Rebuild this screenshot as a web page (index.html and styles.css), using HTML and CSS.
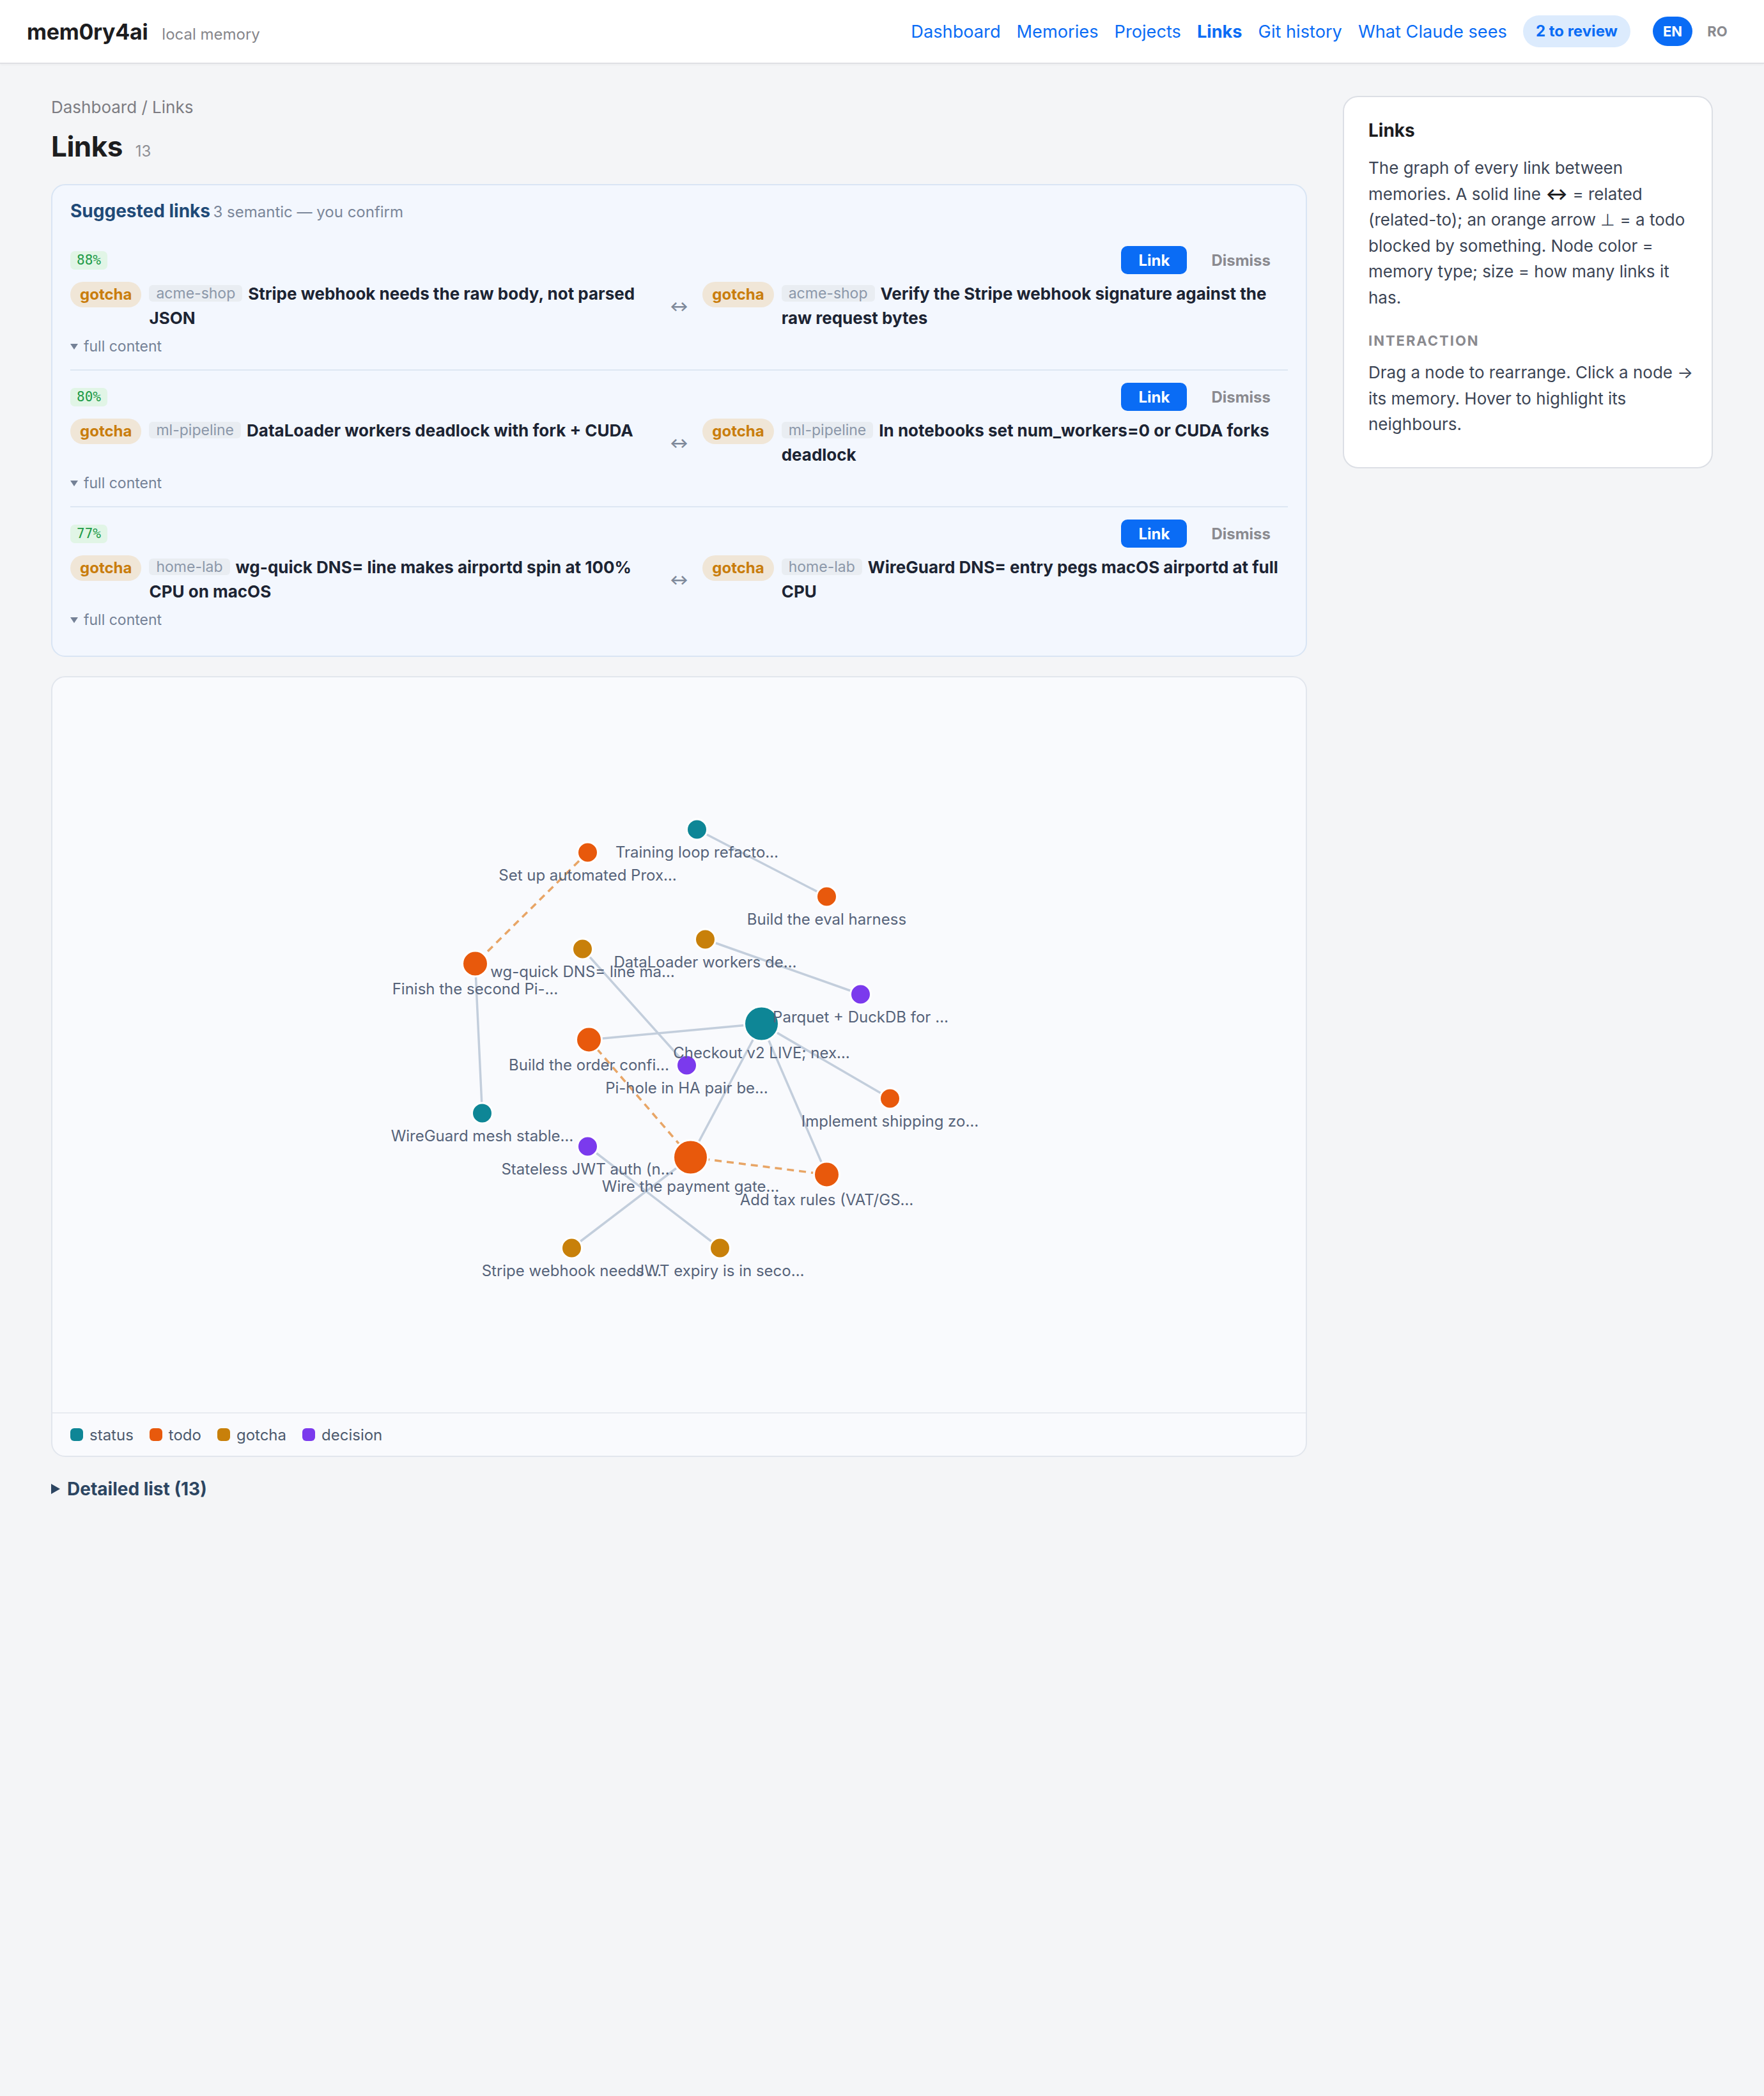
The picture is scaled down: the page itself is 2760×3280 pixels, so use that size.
FILE: index.html
```html
<!DOCTYPE html>
<html lang="en">
<head>
<meta charset="utf-8">
<title>Links · mem0ry4ai</title>
<link rel="stylesheet" href="styles.css">
</head>
<body>
<header class="topbar">
  <div class="brand">
    <span class="logo">mem0ry4ai</span>
    <span class="tagline">local memory</span>
  </div>
  <nav class="nav">
    <a class="nav-link" href="#">Dashboard</a>
    <a class="nav-link" href="#">Memories</a>
    <a class="nav-link" href="#">Projects</a>
    <a class="nav-link is-current" href="#">Links</a>
    <a class="nav-link" href="#">Git history</a>
    <a class="nav-link" href="#">What Claude sees</a>
    <a class="review-pill" href="#">2 to review</a>
    <div class="lang">
      <span class="lang-btn is-on">EN</span>
      <span class="lang-btn">RO</span>
    </div>
  </nav>
</header>

<div class="layout">
  <main class="main">
    <div class="crumbs">Dashboard / Links</div>
    <h1 class="page-title">Links <span class="count">13</span></h1>

    <section class="suggest">
      <div class="suggest-title"><strong>Suggested links</strong> <span class="suggest-sub">3 semantic — you confirm</span></div>

      <div class="sugg-list">
        <div class="sugg-row">
          <div class="row-head">
            <span class="pct">88%</span>
            <div class="actions"><button class="btn-link">Link</button><button class="btn-dismiss">Dismiss</button></div>
          </div>
          <div class="pair">
            <div class="side"><span class="kind">gotcha</span><div class="text"><span class="proj">acme-shop</span>Stripe webhook needs the raw body, not parsed JSON</div></div>
            <span class="arrow">↔</span>
            <div class="side"><span class="kind">gotcha</span><div class="text"><span class="proj">acme-shop</span>Verify the Stripe webhook signature against the raw request bytes</div></div>
          </div>
          <div class="more"><span class="caret"></span>full content</div>
        </div>

        <div class="sugg-row">
          <div class="row-head">
            <span class="pct">80%</span>
            <div class="actions"><button class="btn-link">Link</button><button class="btn-dismiss">Dismiss</button></div>
          </div>
          <div class="pair">
            <div class="side"><span class="kind">gotcha</span><div class="text"><span class="proj">ml-pipeline</span>DataLoader workers deadlock with fork + CUDA</div></div>
            <span class="arrow">↔</span>
            <div class="side"><span class="kind">gotcha</span><div class="text"><span class="proj">ml-pipeline</span>In notebooks set num_workers=0 or CUDA forks deadlock</div></div>
          </div>
          <div class="more"><span class="caret"></span>full content</div>
        </div>

        <div class="sugg-row">
          <div class="row-head">
            <span class="pct">77%</span>
            <div class="actions"><button class="btn-link">Link</button><button class="btn-dismiss">Dismiss</button></div>
          </div>
          <div class="pair">
            <div class="side"><span class="kind">gotcha</span><div class="text"><span class="proj">home-lab</span>wg-quick DNS= line makes airportd spin at 100% CPU on macOS</div></div>
            <span class="arrow">↔</span>
            <div class="side"><span class="kind">gotcha</span><div class="text"><span class="proj">home-lab</span>WireGuard DNS= entry pegs macOS airportd at full CPU</div></div>
          </div>
          <div class="more"><span class="caret"></span>full content</div>
        </div>
      </div>
    </section>

    <section class="graph-card">
      <svg class="graph" viewBox="0 0 1960 1150" width="1960" height="1150">
        <g class="edges">
          <line class="edge" x1="1008" y1="238" x2="1211" y2="343"/>
          <line class="edge blocked" x1="837" y1="274" x2="661" y2="448"/>
          <line class="edge" x1="661" y1="448" x2="672" y2="682"/>
          <line class="edge" x1="829" y1="425" x2="992" y2="607"/>
          <line class="edge" x1="1021" y1="410" x2="1264" y2="496"/>
          <line class="edge" x1="839" y1="567" x2="1109" y2="542"/>
          <line class="edge blocked" x1="839" y1="567" x2="998" y2="751"/>
          <line class="edge" x1="1109" y1="542" x2="998" y2="751"/>
          <line class="edge" x1="1109" y1="542" x2="1211" y2="778"/>
          <line class="edge" x1="1109" y1="542" x2="1310" y2="659"/>
          <line class="edge blocked" x1="998" y1="751" x2="1211" y2="778"/>
          <line class="edge" x1="998" y1="751" x2="812" y2="893"/>
          <line class="edge" x1="837" y1="734" x2="1044" y2="893"/>
        </g>
        <g class="nodes">
          <circle class="node t-status" cx="1008" cy="238" r="16"/>
          <circle class="node t-todo" cx="837" cy="274" r="16"/>
          <circle class="node t-todo" cx="1211" cy="343" r="16"/>
          <circle class="node t-gotcha" cx="829" cy="425" r="16"/>
          <circle class="node t-gotcha" cx="1021" cy="410" r="16"/>
          <circle class="node t-todo" cx="661" cy="448" r="20"/>
          <circle class="node t-decision" cx="1264" cy="496" r="16"/>
          <circle class="node t-status" cx="1109" cy="542" r="27"/>
          <circle class="node t-todo" cx="839" cy="567" r="20"/>
          <circle class="node t-decision" cx="992" cy="607" r="16"/>
          <circle class="node t-todo" cx="1310" cy="659" r="16"/>
          <circle class="node t-status" cx="672" cy="682" r="16"/>
          <circle class="node t-decision" cx="837" cy="734" r="16"/>
          <circle class="node t-todo" cx="998" cy="751" r="27"/>
          <circle class="node t-todo" cx="1211" cy="778" r="20"/>
          <circle class="node t-gotcha" cx="812" cy="893" r="16"/>
          <circle class="node t-gotcha" cx="1044" cy="893" r="16"/>
        </g>
        <g class="labels">
          <text x="1008" y="282">Training loop refacto…</text>
          <text x="837" y="318">Set up automated Prox…</text>
          <text x="1211" y="387">Build the eval harness</text>
          <text x="829" y="469">wg-quick DNS= line ma…</text>
          <text x="1021" y="454">DataLoader workers de…</text>
          <text x="661" y="496">Finish the second Pi-…</text>
          <text x="1264" y="540">Parquet + DuckDB for …</text>
          <text x="1109" y="596">Checkout v2 LIVE; nex…</text>
          <text x="839" y="615">Build the order confi…</text>
          <text x="992" y="651">Pi-hole in HA pair be…</text>
          <text x="1310" y="703">Implement shipping zo…</text>
          <text x="672" y="726">WireGuard mesh stable…</text>
          <text x="837" y="778">Stateless JWT auth (n…</text>
          <text x="998" y="805">Wire the payment gate…</text>
          <text x="1211" y="826">Add tax rules (VAT/GS…</text>
          <text x="812" y="937">Stripe webhook needs …</text>
          <text x="1044" y="937">JWT expiry is in seco…</text>
        </g>
      </svg>
      <div class="legend">
        <span class="legend-item"><i class="swatch t-status-bg"></i>status</span>
        <span class="legend-item"><i class="swatch t-todo-bg"></i>todo</span>
        <span class="legend-item"><i class="swatch t-gotcha-bg"></i>gotcha</span>
        <span class="legend-item"><i class="swatch t-decision-bg"></i>decision</span>
      </div>
    </section>

    <div class="detail-toggle"><span class="tri"></span>Detailed list (13)</div>
  </main>

  <aside class="side-card">
    <h2 class="side-title">Links</h2>
    <p class="side-text">The graph of every link between memories. A solid line <b class="glyph">↔</b> = related (related-to); an orange arrow ⊥ = a todo blocked by something. Node color = memory type; size = how many links it has.</p>
    <h3 class="side-label">Interaction</h3>
    <p class="side-text">Drag a node to rearrange. Click a node → its memory. Hover to highlight its neighbours.</p>
  </aside>
</div>
</body>
</html>
```

FILE: styles.css
```css
* { box-sizing: border-box; }

html, body {
  margin: 0;
  background: #f4f5f7;
  font-family: Inter, "Noto Sans", "Liberation Sans", sans-serif;
  color: #1d1d1f;
}

/* ---------- top bar ---------- */
.topbar {
  height: 100px;
  background: #fff;
  border-bottom: 2px solid #dfe0e4;
  box-shadow: 0 2px 4px rgba(0, 0, 0, 0.03);
  display: flex;
  align-items: center;
  justify-content: space-between;
  padding: 0 42px;
}
.brand { display: flex; align-items: baseline; gap: 22px; }
.logo { font-size: 34px; font-weight: 700; letter-spacing: -0.3px; color: #1d1d1f; }
.tagline { font-size: 24px; color: #86868b; }

.nav { display: flex; align-items: center; gap: 25px; }
.nav-link { font-size: 27.2px; color: #0a6cf5; text-decoration: none; }
.nav-link.is-current { font-weight: 700; }
.review-pill {
  height: 50px;
  line-height: 50px;
  padding: 0 20px;
  border-radius: 25px;
  background: #dcebfd;
  color: #0a6cf5;
  font-size: 24px;
  font-weight: 700;
  text-decoration: none;
  margin-right: 10px;
}
.lang { display: flex; gap: 8px; }
.lang-btn {
  width: 62px;
  height: 46px;
  line-height: 46px;
  border-radius: 23px;
  text-align: center;
  font-size: 22px;
  font-weight: 700;
  color: #8a8a8f;
}
.lang-btn.is-on { background: #0a6cf5; color: #fff; }

/* ---------- page layout ---------- */
.layout {
  display: flex;
  align-items: flex-start;
  gap: 56px;
  padding: 50px 80px 0;
}
.main { flex: 1; min-width: 0; }

.crumbs { font-size: 26px; line-height: 36px; color: #7c7c82; }
.page-title {
  margin: 16px 0 0;
  font-size: 44px;
  line-height: 54px;
  font-weight: 700;
  letter-spacing: -0.5px;
  color: #1d1d1f;
}
.count { font-size: 24px; font-weight: 400; color: #8e8e93; margin-left: 10px; letter-spacing: 0; }

/* ---------- suggested links ---------- */
.suggest {
  margin-top: 24px;
  background: #f3f7fe;
  border: 2px solid #d9e5f4;
  border-radius: 22px;
  padding: 22px 28px 20px;
}
.suggest-title { line-height: 36px; margin-bottom: 14px; }
.suggest-title strong { font-size: 28px; font-weight: 700; color: #1f4a77; }
.suggest-sub { font-size: 24px; color: #7a8699; }

.sugg-row { padding: 19px 0 21px; border-top: 2px solid #dde7f3; }
.sugg-row:first-child { border-top: none; }

.row-head {
  height: 44px;
  display: flex;
  align-items: center;
  justify-content: space-between;
}
.pct {
  font-family: "DejaVu Sans Mono", "Liberation Mono", monospace;
  font-size: 21px;
  height: 29px;
  line-height: 29px;
  padding: 0 10px;
  border-radius: 7px;
  background: #e1f5e6;
  color: #1e9b48;
}
.actions { display: flex; gap: 11px; }
.btn-link, .btn-dismiss {
  font-family: inherit;
  font-size: 24px;
  font-weight: 700;
  height: 44px;
  padding: 0 27px;
  border: none;
  border-radius: 10px;
}
.btn-link { background: #0a6cf5; color: #fff; }
.btn-dismiss { background: transparent; color: #8a8a8f; }

.pair {
  margin-top: 12px;
  display: grid;
  grid-template-columns: 1fr auto 1fr;
  column-gap: 22px;
  align-items: start;
}
.side { display: flex; align-items: flex-start; gap: 12px; }
.kind {
  flex: none;
  height: 40px;
  line-height: 40px;
  padding: 0 15px;
  border-radius: 20px;
  background: #f0e6d7;
  color: #c97d0c;
  font-size: 24px;
  font-weight: 700;
}
.text { font-size: 26px; font-weight: 700; line-height: 38px; color: #1c2433; }
.proj {
  display: inline-block;
  font-size: 23px;
  font-weight: 400;
  line-height: 26px;
  padding: 0 11px;
  border-radius: 6px;
  background: #e9edf2;
  color: #8b97a9;
  margin-right: 9px;
  vertical-align: 2px;
}
.arrow { align-self: center; font-size: 22px; font-weight: 700; color: #7d8899; }

.more {
  margin-top: 10px;
  display: flex;
  align-items: center;
  gap: 9px;
  font-size: 23px;
  line-height: 30px;
  color: #748196;
}
.caret {
  width: 0;
  height: 0;
  border-left: 6px solid transparent;
  border-right: 6px solid transparent;
  border-top: 9px solid #748196;
}

/* ---------- graph ---------- */
.graph-card {
  margin-top: 30px;
  background: #f9fafd;
  border: 2px solid #e2e6ed;
  border-radius: 22px;
  overflow: hidden;
}
.graph { display: block; width: 100%; height: 1150px; }
.edge { stroke: #c3cedc; stroke-width: 3.5; stroke-linecap: round; }
.edge.blocked { stroke: #e8a566; stroke-dasharray: 11 8; stroke-linecap: butt; }
.node { stroke: #fff; stroke-width: 3; }
.t-status { fill: #0e8696; }
.t-todo { fill: #e8590c; }
.t-gotcha { fill: #c8800a; }
.t-decision { fill: #7b3aed; }
.labels text {
  font-family: Inter, "Noto Sans", sans-serif;
  font-size: 24px;
  fill: #56637a;
  text-anchor: middle;
}

.legend {
  height: 68px;
  border-top: 2px solid #e8ebf0;
  padding: 0 28px;
  display: flex;
  align-items: center;
  gap: 25px;
}
.legend-item { display: flex; align-items: center; gap: 10px; font-size: 24px; color: #4d5a6e; }
.swatch { width: 20px; height: 20px; border-radius: 6px; display: block; }
.t-status-bg { background: #0e8696; }
.t-todo-bg { background: #e8590c; }
.t-gotcha-bg { background: #c8800a; }
.t-decision-bg { background: #7b3aed; }

.detail-toggle {
  margin-top: 32px;
  display: flex;
  align-items: center;
  gap: 11px;
  font-size: 28px;
  line-height: 36px;
  font-weight: 700;
  color: #2c4561;
}
.tri {
  width: 0;
  height: 0;
  border-top: 8px solid transparent;
  border-bottom: 8px solid transparent;
  border-left: 14px solid #2c4561;
}

/* ---------- side card ---------- */
.side-card {
  flex: none;
  width: 579px;
  background: #fff;
  border: 2px solid #dcdfe5;
  border-radius: 24px;
  padding: 34px 28px 46px 38px;
}
.side-title { margin: 0 0 21px; font-size: 28px; line-height: 36px; font-weight: 700; color: #1d1d1f; }
.side-text { margin: 0; font-size: 26px; line-height: 40.5px; color: #3c4555; }
.glyph { color: #1d1d1f; }
.side-label {
  margin: 32px 0 15px;
  font-size: 22px;
  line-height: 30px;
  font-weight: 700;
  letter-spacing: 0.09em;
  text-transform: uppercase;
  color: #8a8a8f;
}
```
